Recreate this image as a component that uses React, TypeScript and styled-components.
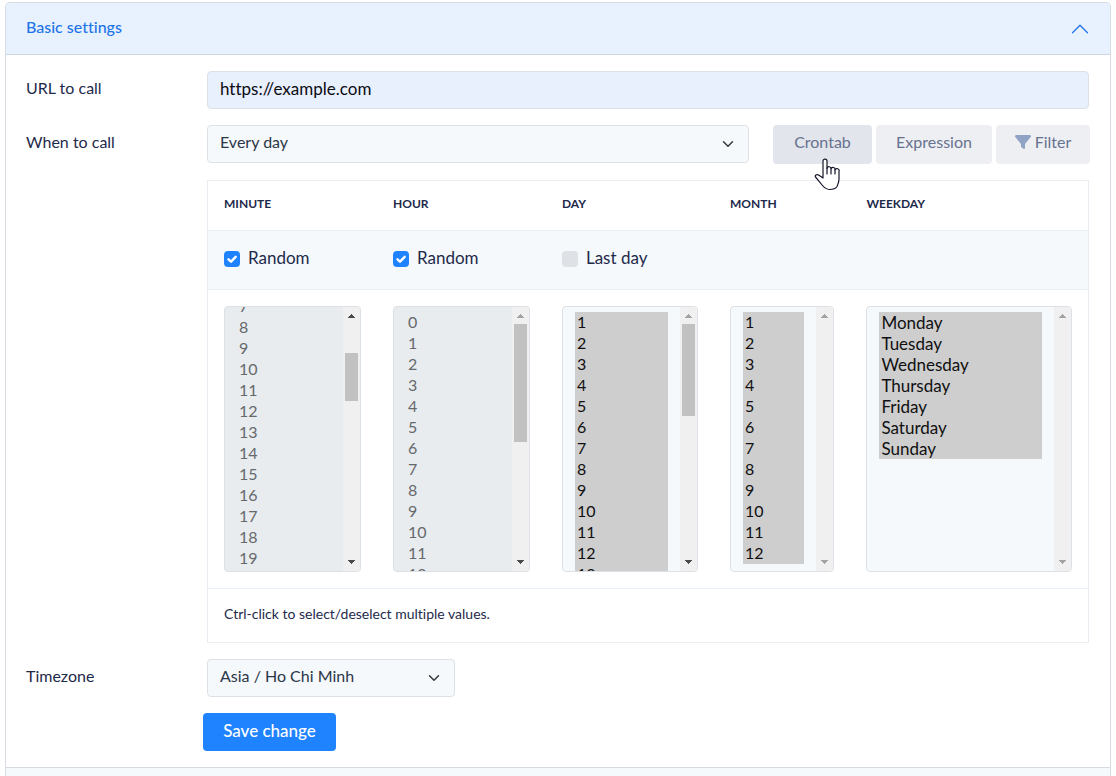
import React, { useEffect, useRef, useState } from "react";
import styled, { createGlobalStyle } from "styled-components";

const GlobalStyle = createGlobalStyle`
  *, *::before, *::after { box-sizing: border-box; }
  body {
    margin: 0;
    background: #fff;
    color: #1e2a4a;
    font-family: Lato, "Liberation Sans", sans-serif;
    font-size: 16px;
    line-height: 24px;
    font-variant-ligatures: none;
  }
  button, input, select { font: inherit; font-variant-ligatures: none; }
`;

const Page = styled.main`
  display: flex;
  flex-direction: column;
  min-height: 100vh;
  padding: 2px 5px 0;
`;

const Accordion = styled.div`
  flex: 1;
  display: flex;
  flex-direction: column;
  border: 1px solid #d5dbe1;
  border-bottom: 0;
  border-radius: 5px 5px 0 0;
  overflow: hidden;
`;

const AccordionHeader = styled.button`
  display: flex;
  align-items: center;
  justify-content: space-between;
  height: 52px;
  padding: 0 20px 3px;
  border: 0;
  border-bottom: 1px solid #ccd6e0;
  background: #e8f2ff;
  color: #1f75e6;
  font-weight: 500;
  text-align: left;
`;

const HeaderChevron = styled.svg`
  margin-top: 4px;
`;

const NextSection = styled.div`
  flex: 1;
  border-top: 1px solid #d5dbe1;
  background: #f5f9fc;
`;

const Form = styled.form`
  display: flex;
  flex-direction: column;
  gap: 16px;
  padding: 16px 21px 16px 20px;
`;

const Field = styled.div`
  display: grid;
  grid-template-columns: 165px minmax(0, 1fr);
  column-gap: 16px;
`;

const FieldLabel = styled.label`
  padding: 5px 0 9px;
`;

const TextInput = styled.input`
  width: 100%;
  height: 38px;
  padding: 0 12px 4px;
  border: 1px solid #dce1e7;
  border-radius: 4px;
  background: #e8effd;
  color: #0b0b12;
  font-size: 17px;
`;

const SelectWrap = styled.div<{ $width?: string }>`
  position: relative;
  flex: ${(p) => (p.$width ? "none" : "1")};
  width: ${(p) => p.$width ?? "auto"};
  height: 38px;
`;

const SelectBox = styled.select`
  appearance: none;
  width: 100%;
  height: 38px;
  padding: 0 36px 4px 12px;
  border: 1px solid #dce1e7;
  border-radius: 4px;
  background: #f5f9fc;
  color: #2b3648;
`;

const Caret = styled.svg`
  position: absolute;
  top: 13px;
  right: 13px;
  pointer-events: none;
`;

const Controls = styled.div`
  display: flex;
  gap: 24px;
`;

const ButtonGroup = styled.div`
  display: flex;
  gap: 4px;
  margin-right: -1px;
`;

const ModeButton = styled.button<{ $width: number; $active?: boolean }>`
  position: relative;
  display: flex;
  align-items: center;
  justify-content: center;
  gap: 4px;
  width: ${(p) => p.$width}px;
  height: 39px;
  padding: 0 0 5px;
  border: 0;
  border-radius: 4px;
  background: ${(p) => (p.$active ? "#e2e5ec" : "#eeeff3")};
  color: #66728f;
`;

const Pointer = styled.svg`
  position: absolute;
  top: 33px;
  left: 41px;
  z-index: 1;
`;

const Schedule = styled.table`
  width: 100%;
  border: 1px solid #e9edf2;
  border-collapse: separate;
  border-spacing: 0;
  table-layout: fixed;
`;

const Column = styled.col<{ $share: string }>`
  width: ${(p) => p.$share};
`;

const HeadCell = styled.th`
  height: 50px;
  padding: 0 16px 4px;
  border-bottom: 1px solid #e9eff6;
  font-size: 12px;
  font-weight: 700;
  line-height: 18px;
  text-align: left;
  text-transform: uppercase;
`;

const OptionCell = styled.td`
  height: 59px;
  padding: 0 16px 4px;
  border-bottom: 1px solid #e9eff6;
  background: #f5f9fc;
`;

const ListCell = styled.td`
  padding: 16px;
  border-bottom: 1px solid #e9eff6;
`;

const NoteCell = styled.td`
  height: 53px;
  padding: 0 16px 4px;
  font-size: 14px;
  line-height: 20px;
`;

const CheckLabel = styled.label`
  display: flex;
  align-items: center;
  gap: 8px;
  font-size: 17px;
`;

const CheckMark = styled.span`
  position: relative;
  display: flex;
  margin-top: 2px;
`;

const CheckInput = styled.input`
  appearance: none;
  width: 16px;
  height: 16px;
  margin: 0;
  border-radius: 4px;
  background: #dee2e6;
  &:checked { background: #1f83ff; }
  & + svg { display: none; }
  &:checked + svg { display: block; }
`;

const Tick = styled.svg`
  position: absolute;
  inset: 0;
  pointer-events: none;
`;

const ListFrame = styled.div<{ $disabled?: boolean }>`
  display: flex;
  height: 266px;
  border: 1px solid #dce1e7;
  border-radius: 4px;
  background: ${(p) => (p.$disabled ? "#e8ecef" : "#f5f9fc")};
  overflow: hidden;
`;

const ListOption = styled.option`
  height: 21px;
  min-height: 21px;
  padding: 0 2px;
`;

const ListSelect = styled.select<{ $words?: boolean }>`
  flex: 1;
  min-width: 0;
  height: 264px;
  padding: 5px 12px 7px;
  border: 0;
  border-radius: 0;
  outline: 0;
  background: transparent;
  color: #101010;
  font-size: ${(p) => (p.$words ? 17 : 16)}px;
  opacity: 1;
  overflow-y: scroll;
  scrollbar-width: none;
  &::-webkit-scrollbar { display: none; }
  &:disabled ${ListOption} { color: #66696c; }
`;

const ScrollTrack = styled.div`
  display: flex;
  flex-direction: column;
  flex: none;
  width: 17px;
  background: #f0f0f0;
`;

const ScrollArrow = styled.svg<{ $on: boolean }>`
  flex: none;
  fill: ${(p) => (p.$on ? "#4a4a4a" : "#a3a3a3")};
`;

const ScrollRail = styled.div`
  flex: 1;
  padding: 0 2px;
`;

const ScrollThumb = styled.div`
  width: 13px;
  background: #c1c1c1;
`;

const SaveButton = styled.button`
  justify-self: start;
  grid-column: 2;
  width: 133px;
  height: 38px;
  margin-left: -4px;
  padding: 0 0 3px;
  border: 0;
  border-radius: 4px;
  background: #1f83ff;
  color: #fff;
  font-size: 17px;
  font-weight: 500;
`;

const RAIL = 230;
const VIEW = 264;
const ROW = 21;

type ListProps = {
  label: string;
  items: string[];
  disabled?: boolean;
  selectAll?: boolean;
  words?: boolean;
  initialScroll?: number;
};

function ValueList({ label, items, disabled, selectAll, words, initialScroll = 0 }: ListProps) {
  const ref = useRef<HTMLSelectElement>(null);
  const [top, setTop] = useState(initialScroll);
  const content = items.length * ROW + 12;
  const scrolls = content > VIEW;

  useEffect(() => {
    if (ref.current) ref.current.scrollTop = initialScroll;
  }, [initialScroll]);

  return (
    <ListFrame $disabled={disabled}>
      <ListSelect
        ref={ref}
        multiple
        $words={words}
        aria-label={label}
        disabled={disabled}
        defaultValue={selectAll ? items : []}
        onScroll={(e) => setTop(e.currentTarget.scrollTop)}
      >
        {items.map((item) => (
          <ListOption key={item} value={item}>{item}</ListOption>
        ))}
      </ListSelect>
      <ScrollTrack aria-hidden="true">
        <ScrollArrow $on={scrolls && top > 0} width="17" height="17">
          <path d="M5 11h7v-1h-1v-1h-1v-1h-1v-1h-1v1h-1v1h-1v1h-1z" />
        </ScrollArrow>
        <ScrollRail>
          {scrolls && (
            <ScrollThumb
              style={{
                height: Math.round((RAIL * VIEW) / content),
                marginTop: Math.round((RAIL * top) / content),
              }}
            />
          )}
        </ScrollRail>
        <ScrollArrow $on={scrolls} width="17" height="17">
          <path d="M5 6h7v1h-1v1h-1v1h-1v1h-1v-1h-1v-1h-1v-1h-1z" />
        </ScrollArrow>
      </ScrollTrack>
    </ListFrame>
  );
}

function Check({ label, checked }: { label: string; checked?: boolean }) {
  return (
    <CheckLabel>
      <CheckMark>
        <CheckInput type="checkbox" defaultChecked={checked} />
        <Tick viewBox="0 0 16 16" width="16" height="16">
          <path d="M4.5 8.3 7 10.7l4.7-4.9" fill="none" stroke="#fff" strokeWidth="2.4" strokeLinecap="round" strokeLinejoin="round" />
        </Tick>
      </CheckMark>
      {label}
    </CheckLabel>
  );
}

function CaretDown() {
  return (
    <Caret viewBox="0 0 16 16" width="16" height="12">
      <path d="m2 5 6 6 6-6" fill="none" stroke="#343a40" strokeWidth="2" strokeLinecap="round" strokeLinejoin="round" />
    </Caret>
  );
}

const range = (from: number, to: number) =>
  Array.from({ length: to - from + 1 }, (_, i) => String(from + i));

const WEEKDAYS = ["Monday", "Tuesday", "Wednesday", "Thursday", "Friday", "Saturday", "Sunday"];

export default function App() {
  return (
    <Page>
      <GlobalStyle />
      <Accordion>
        <AccordionHeader type="button" aria-expanded="true">
          Basic settings
          <HeaderChevron viewBox="0 0 16 16" width="20" height="20" fill="#1f75e6">
            <path d="M1.646 11.354a.5.5 0 0 0 .708 0L8 5.707l5.646 5.647a.5.5 0 0 0 .708-.708l-6-6a.5.5 0 0 0-.708 0l-6 6a.5.5 0 0 0 0 .708z" />
          </HeaderChevron>
        </AccordionHeader>
        <Form onSubmit={(e) => e.preventDefault()}>
          <Field>
            <FieldLabel htmlFor="url">URL to call</FieldLabel>
            <TextInput id="url" type="text" defaultValue="https://example.com" />
          </Field>
          <Field>
            <FieldLabel htmlFor="when">When to call</FieldLabel>
            <Controls>
              <SelectWrap>
                <SelectBox id="when" defaultValue="Every day">
                  <option>Every day</option>
                </SelectBox>
                <CaretDown />
              </SelectWrap>
              <ButtonGroup>
                <ModeButton type="button" $width={99} $active>
                  Crontab
                  <Pointer viewBox="0 0 26 33" width="26" height="33">
                    <path
                      d="M9 17V3.2a2 2 0 0 1 4 0V10.5a1.9 1.9 0 0 1 4 .5a1.9 1.9 0 0 1 4 1a1.9 1.9 0 0 1 4 1.5V21c0 3-.8 4.5-2 7.5-1.5 2.5-4 3-7.5 3-3.5-.2-5-1.5-7-4L1.5 19c-1-1.5 1-3.2 3.5-1.8L9 20z"
                      fill="#fff" stroke="#15152a" strokeWidth="1.2" strokeLinejoin="round"
                    />
                    <path d="M13 10v6M17 11v5M21 12v4" stroke="#15152a" strokeWidth="1.2" strokeLinecap="round" />
                  </Pointer>
                </ModeButton>
                <ModeButton type="button" $width={116}>Expression</ModeButton>
                <ModeButton type="button" $width={94}>
                  <svg viewBox="0 0 512 512" width="16" height="16" fill="#90a3c4">
                    <path d="M3.9 54.9C10.5 40.9 24.5 32 40 32H472c15.5 0 29.5 8.9 36.1 22.9s4.6 30.5-5.2 42.5L320 320.900V448c0 12.100-6.800 23.200-17.700 28.600s-23.800 4.300-33.500-3l-64-48c-8.100-6-12.800-15.500-12.800-25.600V320.900L9 97.300C-.7 85.400-2.800 68.800 3.900 54.900z" />
                  </svg>
                  Filter
                </ModeButton>
              </ButtonGroup>
            </Controls>
          </Field>
          <Field>
            <span />
            <Schedule>
              <colgroup>
                <Column $share="19.2%" />
                <Column $share="19.2%" />
                <Column $share="19.1%" />
                <Column $share="15.5%" />
                <Column $share="27%" />
              </colgroup>
              <thead>
                <tr>
                  <HeadCell scope="col">Minute</HeadCell>
                  <HeadCell scope="col">Hour</HeadCell>
                  <HeadCell scope="col">Day</HeadCell>
                  <HeadCell scope="col">Month</HeadCell>
                  <HeadCell scope="col">Weekday</HeadCell>
                </tr>
              </thead>
              <tbody>
                <tr>
                  <OptionCell><Check label="Random" checked /></OptionCell>
                  <OptionCell><Check label="Random" checked /></OptionCell>
                  <OptionCell><Check label="Last day" /></OptionCell>
                  <OptionCell />
                  <OptionCell />
                </tr>
                <tr>
                  <ListCell><ValueList label="Minute" items={range(0, 59)} disabled initialScroll={163} /></ListCell>
                  <ListCell><ValueList label="Hour" items={range(0, 23)} disabled /></ListCell>
                  <ListCell><ValueList label="Day" items={range(1, 31)} selectAll /></ListCell>
                  <ListCell><ValueList label="Month" items={range(1, 12)} selectAll /></ListCell>
                  <ListCell><ValueList label="Weekday" items={WEEKDAYS} selectAll words /></ListCell>
                </tr>
                <tr>
                  <NoteCell colSpan={5}>Ctrl-click to select/deselect multiple values.</NoteCell>
                </tr>
              </tbody>
            </Schedule>
          </Field>
          <Field>
            <FieldLabel htmlFor="timezone">Timezone</FieldLabel>
            <SelectWrap $width="248px">
              <SelectBox id="timezone" defaultValue="Asia / Ho Chi Minh">
                <option>Asia / Ho Chi Minh</option>
              </SelectBox>
              <CaretDown />
            </SelectWrap>
          </Field>
          <Field>
            <SaveButton type="submit">Save change</SaveButton>
          </Field>
        </Form>
        <NextSection />
      </Accordion>
    </Page>
  );
}
